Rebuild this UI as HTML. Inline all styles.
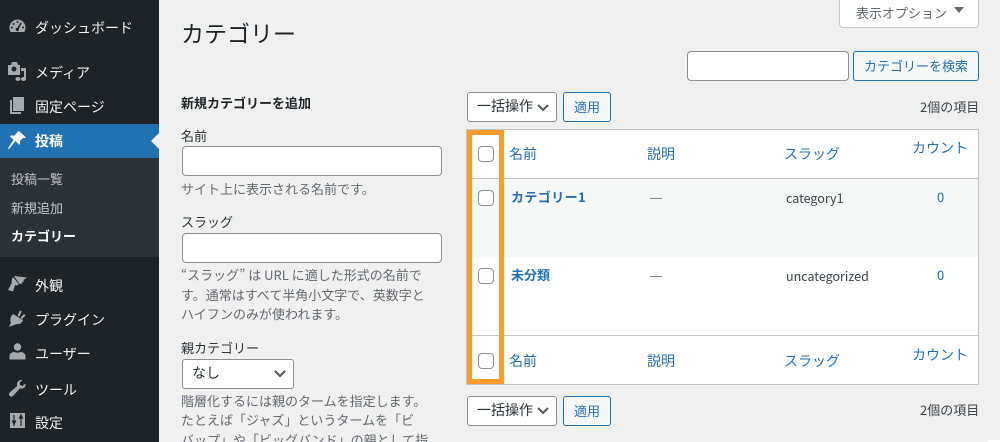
<!DOCTYPE html>
<html lang="ja"><head><meta charset="utf-8"><style>
*{box-sizing:border-box}
html,body{margin:0;padding:0;width:1000px;height:442px;overflow:hidden;background:#f0f0f1}
body{position:relative;font-family:"Noto Sans CJK JP",sans-serif;font-size:13px;color:#3c434a}
.t{position:absolute;white-space:nowrap;line-height:20px;height:20px}
.b{position:absolute}
.m{color:#f0f0f1;font-size:14px;left:35px}
.s{color:#c3c4c7;font-size:13px;left:11px}
.l{color:#2271b1}
.d{color:#646970;font-size:13px;left:181px}
.inp{background:#fff;border:1px solid #8c8f94;border-radius:4px}
.btn{position:absolute;background:#f6f7f7;border:1px solid #2271b1;border-radius:3px;color:#2271b1;text-align:center;font-size:13px;line-height:27px}
.sel{position:absolute;background:#fff;border:1px solid #8c8f94;border-radius:3px;color:#2c3338;font-size:14px;line-height:27px;padding-left:9px}
.cb{position:absolute;left:478px;width:16px;height:16px;background:#fff;border:1px solid #8c8f94;border-radius:4px}
svg{position:absolute;overflow:visible}
</style></head><body>
<div class="b" style="left:0;top:0;width:159px;height:442px;background:#1d2327"></div>
<div class="b" style="left:0;top:124px;width:159px;height:34px;background:#2271b1"></div>
<div class="b" style="left:0;top:158px;width:159px;height:99px;background:#2c3338"></div>
<svg style="left:151px;top:133px" width="8" height="16"><path d="M8 0L0 8l8 8z" fill="#f0f0f1"/></svg>

<svg style="left:9px;top:18px" width="17" height="16" viewBox="0 0 17 16" fill="#a7aaad"><path d="M8.5 1.5A8 8 0 0 0 .5 9.5c0 1.6.4 3 1.2 4.500h13.600c.8-1.500 1.200-2.900 1.200-4.500a8 8 0 0 0-8-8z"/><g fill="#1d2327"><circle cx="8.500" cy="4" r="1"/><circle cx="4.500" cy="6" r="1"/><circle cx="3" cy="9.500" r="1"/><circle cx="14" cy="9.500" r="1"/><path d="M11.500 4.500l1.300.8-3 5.200a1.700 1.700 0 1 1-1.400-.8z"/></g></svg>
<svg style="left:8px;top:62px" width="18" height="19" viewBox="0 0 18 19" fill="#a7aaad"><path d="M0 3h3l1-3h5l1 3h2v10H0z"/><circle cx="6" cy="7" r="2.500" fill="#1d2327"/><path d="M13 6h5v11a2.500 2 0 1 1-2-2V9h-3zM10 15a2.500 2 0 1 1-.1 0z"/></svg>
<svg style="left:10px;top:97px" width="14" height="17" viewBox="0 0 14 17"><path d="M0 3h2v12h9v2H0z" fill="#a7aaad"/><path d="M3 0h11v14H3z" fill="#a7aaad"/></svg>
<svg style="left:8px;top:131px" width="18" height="18" viewBox="0 0 18 18" fill="#fff"><path d="M11 0l7 6.500-1.500.8-1-.5-3.500 3c.5 1.700.2 3-.7 4.200L7.500 10 1 18l-1-.5L5.500 8.800 1.700 5.400c1.300-1 2.800-1.200 4.300-.7l3.300-2.900-.3-1z"/></svg>
<svg style="left:8px;top:276px" width="19" height="16" viewBox="0 0 19 16" fill="#a7aaad"><path d="M6 0l13 1.500-3.500 2.500.5 1.500-2 .5.500 1.500-3 .5z"/><path d="M5 1l6 7.500-2.500 1-1.500-.5L5 15.500 0 14 3.500 7.500 4 3z"/></svg>
<svg style="left:9px;top:309px" width="17" height="18" viewBox="0 0 17 18" fill="#a7aaad"><path d="M4 5l10 6c-1 3-3 4.500-6 4l-3 1-5 2 2-4.500c-1.500-2.500-.5-6 2-8.500z"/><path d="M8.500 6.500L11 1.500l1.800 1-2.500 5zM11.500 8.500L15 5l1.500 1.500-3.300 3.500z"/></svg>
<svg style="left:9px;top:343px" width="17" height="17" viewBox="0 0 17 17" fill="#a7aaad"><circle cx="8.500" cy="4" r="3.700"/><path d="M.5 16.500v-3.500c0-2.500 3-4 4.500-4.300 2 1.300 5 1.300 7 0 1.500.3 4.500 1.800 4.500 4.300v3.500z"/></svg>
<svg style="left:9px;top:380px" width="17" height="17" viewBox="0 0 17 17" fill="#a7aaad"><path d="M16.500 3.500l-3 2.500-2.500-1 -.3-2.500L13.500 0C11-.5 8.500 1 8 3.500c-.2 1 0 1.700.2 2.500L.7 12.500c-1 1-1 2.500 0 3.500s2.500.8 3.300 0l6.800-7.500c2.700.8 6.700-1 5.700-5z"/></svg>
<svg style="left:10px;top:413px" width="15" height="15" viewBox="0 0 15 15"><path d="M0 0h15v15H0z" fill="#a7aaad"/><path d="M4 2v5M2.500 8h3L4 11.500zM4 9v4M11 2v8M9.500 5h3L11 2zM11 10v3" stroke="#1d2327" stroke-width="1.200" fill="#1d2327"/></svg>

<div class="t m" style="top:18px">ダッシュボード</div>
<div class="t m" style="top:63px">メディア</div>
<div class="t m" style="top:97px">固定ページ</div>
<div class="t m" style="top:131px;color:#fff;font-weight:700">投稿</div>
<div class="t s" style="top:169px">投稿一覧</div>
<div class="t s" style="top:198px">新規追加</div>
<div class="t s" style="top:226px;color:#fff;font-weight:700">カテゴリー</div>
<div class="t m" style="top:276px">外観</div>
<div class="t m" style="top:310px">プラグイン</div>
<div class="t m" style="top:344px">ユーザー</div>
<div class="t m" style="top:380px">ツール</div>
<div class="t m" style="top:413px">設定</div>

<div class="b" style="left:839px;top:-1px;width:140px;height:29px;background:#fff;border:1px solid #c3c4c7;border-radius:0 0 4px 4px"></div>
<div class="t" style="left:856px;top:3px;color:#646970;font-size:13px">表示オプション</div>
<svg style="left:954px;top:7px" width="10" height="7"><path d="M0 0h10L5 6z" fill="#646970"/></svg>

<div class="t" style="left:181px;top:18px;height:28px;line-height:28px;font-size:23px;color:#1d2327">カテゴリー</div>

<div class="b inp" style="left:687px;top:51px;width:162px;height:30px"></div>
<div class="btn" style="left:853px;top:51px;width:126px;height:30px;line-height:28px">カテゴリーを検索</div>

<div class="t" style="left:181px;top:93px;font-weight:700;color:#1d2327">新規カテゴリーを追加</div>
<div class="t" style="left:181px;top:126px;color:#2c3338">名前</div>
<div class="b inp" style="left:182px;top:146px;width:260px;height:30px"></div>
<div class="t d" style="top:179px">サイト上に表示される名前です。</div>
<div class="t" style="left:181px;top:212px;color:#2c3338">スラッグ</div>
<div class="b inp" style="left:182px;top:233px;width:260px;height:30px"></div>
<div class="t d" style="top:265px">“スラッグ” は URL に適した形式の名前で</div>
<div class="t d" style="top:285px">す。通常はすべて半角小文字で、英数字と</div>
<div class="t d" style="top:304px">ハイフンのみが使われます。</div>
<div class="t" style="left:181px;top:338px;color:#2c3338">親カテゴリー</div>
<div class="sel" style="left:182px;top:359px;width:112px;height:30px;font-size:14px">なし</div>
<svg style="left:274px;top:370px" width="12" height="8"><path d="M1 1l5 5 5-5" fill="none" stroke="#50575e" stroke-width="2"/></svg>
<div class="t d" style="top:391px">階層化するには親のタームを指定します。</div>
<div class="t d" style="top:410px">たとえば「ジャズ」というタームを「ビ</div>
<div class="t d" style="top:430px">バップ」や「ビッグバンド」の親として指</div>

<div class="sel" style="left:467px;top:92px;width:90px;height:30px">一括操作</div>
<svg style="left:537px;top:104px" width="12" height="8"><path d="M1 1l5 5 5-5" fill="none" stroke="#50575e" stroke-width="2"/></svg>
<div class="btn" style="left:563px;top:92px;width:48px;height:30px;line-height:28px">適用</div>
<div class="t" style="left:920px;top:97px;font-size:13px">2個の項目</div>

<div class="b" style="left:466px;top:129px;width:513px;height:256px;background:#fff;border:1px solid #c3c4c7"></div>
<div class="b" style="left:467px;top:179px;width:511px;height:78px;background:#f6f7f7"></div>
<div class="b" style="left:467px;top:178px;width:511px;height:1px;background:#c3c4c7"></div>
<div class="b" style="left:467px;top:335px;width:511px;height:1px;background:#c3c4c7"></div>
<div class="b" style="left:467px;top:130px;width:37px;height:254px;border:5px solid #ff9b30"></div>

<div class="cb" style="top:146px"></div>
<div class="cb" style="top:190px"></div>
<div class="cb" style="top:268px"></div>
<div class="cb" style="top:353px"></div>

<div class="t l" style="left:509px;top:144px;font-size:14px">名前</div>
<div class="t l" style="left:647px;top:144px;font-size:14px">説明</div>
<div class="t l" style="left:784px;top:144px;font-size:14px">スラッグ</div>
<div class="t l" style="left:912px;top:138px;font-size:14px">カウント</div>

<div class="t l" style="left:511px;top:187px;font-weight:700;letter-spacing:.4px">カテゴリー1</div>
<div class="t" style="left:649px;top:189px;font-size:14px">―</div>
<div class="t" style="left:786px;top:188px;font-size:12.500px">category1</div>
<div class="t l" style="left:937px;top:187px;font-size:13px">0</div>

<div class="t l" style="left:511px;top:265px;font-weight:700">未分類</div>
<div class="t" style="left:649px;top:267px;font-size:14px">―</div>
<div class="t" style="left:786px;top:266px;font-size:12.500px">uncategorized</div>
<div class="t l" style="left:937px;top:265px;font-size:13px">0</div>

<div class="t l" style="left:509px;top:351px;font-size:14px">名前</div>
<div class="t l" style="left:647px;top:351px;font-size:14px">説明</div>
<div class="t l" style="left:784px;top:351px;font-size:14px">スラッグ</div>
<div class="t l" style="left:912px;top:345px;font-size:14px">カウント</div>

<div class="sel" style="left:467px;top:396px;width:90px;height:30px">一括操作</div>
<svg style="left:537px;top:407px" width="12" height="8"><path d="M1 1l5 5 5-5" fill="none" stroke="#50575e" stroke-width="2"/></svg>
<div class="btn" style="left:563px;top:396px;width:48px;height:30px;line-height:28px">適用</div>
<div class="t" style="left:920px;top:400px;font-size:13px">2個の項目</div>
<div class="b" style="left:988px;top:440px;width:12px;height:2px;background:#fff"></div>
</body></html>
